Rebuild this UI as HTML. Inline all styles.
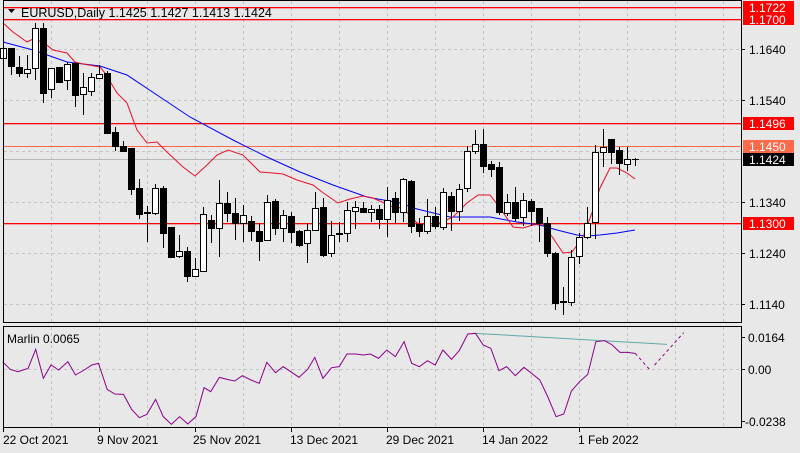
<!DOCTYPE html>
<html><head><meta charset="utf-8"><style>
html,body{margin:0;padding:0;background:#e8e8e8;}
svg{display:block;font-family:"Liberation Sans",sans-serif;font-size:12px;}
.w{fill:#fff;stroke:#000;stroke-width:1}
.b{fill:#000;stroke:#000;stroke-width:1}
.g{stroke:#c4c4c4;stroke-width:1;stroke-dasharray:3,3;fill:none}
</style></head><body>
<svg width="800" height="453" viewBox="0 0 800 453" xmlns="http://www.w3.org/2000/svg">
<rect width="800" height="453" fill="#e8e8e8"/>
<path class="g" d="M51.5 1V322M99.5 1V322M147.5 1V322M195.5 1V322M243.5 1V322M291.5 1V322M339.5 1V322M387.5 1V322M435.5 1V322M483.5 1V322M531.5 1V322M579.5 1V322M627.5 1V322M675.5 1V322M723.5 1V322M4 49.5H741M4 100.5H741M4 151.5H741M4 202.5H741M4 253.5H741M4 304.5H741"/>
<path class="g" d="M51.5 327V427M99.5 327V427M147.5 327V427M195.5 327V427M243.5 327V427M291.5 327V427M339.5 327V427M387.5 327V427M435.5 327V427M483.5 327V427M531.5 327V427M579.5 327V427M627.5 327V427M675.5 327V427M723.5 327V427M4 369.5H741"/>
<rect x="4" y="7" width="737" height="1.3" fill="#ff0000"/>
<rect x="4" y="19" width="737" height="1.3" fill="#ff0000"/>
<rect x="4" y="123" width="737" height="1.3" fill="#ff0000"/>
<rect x="4" y="223" width="737" height="1.3" fill="#ff0000"/>
<rect x="4" y="146" width="737" height="1" fill="#ff6a4a"/>
<rect x="4" y="159" width="737" height="1" fill="#b8b8b8"/>
<polyline fill="none" stroke="#00f" stroke-width="1" points="3,42 33,50 67,62 100,66 127,75 160,97 190,117 233,140 267,157 300,172 333,185 367,197 400,203 417,209 450,217 490,217 517,222 540,225 557,230 577,235 587,236 600,235 617,233 635,230"/>
<polyline fill="none" stroke="#e8102a" stroke-width="1" points="3,23 13,32 27,42 33,39 43,42 53,50 67,53 75,62 83,64 100,67 105,73 117,93 127,103 137,130 147,143 157,142 167,152 183,167 195,176 207,165 217,155 228,150 243,155 260,172 273,173 283,174 297,180 313,185 322,192 338,203 350,199 363,196 373,198 393,207 403,208 417,223 433,226 453,217 467,203 478,195 490,195 500,208 513,227 523,228 533,225 543,224 553,238 563,253 572,252 583,237 593,210 600,188 610,168 617,168 627,173 635,179"/>
<path stroke="#000" stroke-width="1" fill="none" d="M3.5 48V58M11.5 48V75M19.5 56V77M27.5 55V78M35.5 23V80M43.5 23V103M51.5 68V98M59.5 67V83M67.5 62V90M75.5 63V107M83.5 73V115M91.5 73V96M99.5 65V78M107.5 71V133M115.5 127V151M123.5 141V151M131.5 148V195M139.5 179V219M147.5 206V242M155.5 184V215M163.5 186V248M171.5 227V258M179.5 235V258M187.5 247V282M195.5 258V276M203.5 207V271M211.5 215V243M219.5 180V257M227.5 192V222M235.5 198V240M243.5 205V242M251.5 216V241M259.5 223V261M267.5 195V240M275.5 199V235M283.5 210V242M291.5 212V243M299.5 230V247M307.5 223V263M315.5 192V230M323.5 198V257M331.5 221V257M339.5 222V242M347.5 202V242M355.5 201V229M363.5 202V212M371.5 205V222M379.5 205V229M387.5 187V237M395.5 192V223M403.5 178V222M411.5 180V233M419.5 218V237M427.5 199V234M435.5 207V229M443.5 188V230M451.5 192V231M459.5 184V221M467.5 146V192M475.5 130V154M483.5 129V173M491.5 161V177M499.5 162V215M507.5 194V216M515.5 187V221M523.5 193V226M531.5 199V226M539.5 208V242M547.5 217V257M555.5 252V310M563.5 287V315M571.5 250V306M579.5 233V264M587.5 207V239M595.5 145V239M603.5 129V167M611.5 139V164M619.5 147V175M627.5 147V171M635.5 158V166M632 159.5H639"/>
<g>
<rect class="w" x="0.5" y="48.5" width="6" height="10"/>
<rect class="b" x="8.5" y="48.5" width="6" height="18"/>
<rect class="b" x="16.5" y="67.5" width="6" height="6"/>
<rect class="w" x="24.5" y="69.5" width="6" height="4"/>
<rect class="w" x="32.5" y="28.5" width="6" height="40"/>
<rect class="b" x="40.5" y="28.5" width="6" height="65"/>
<rect class="w" x="48.5" y="68.5" width="6" height="21"/>
<rect class="b" x="56.5" y="67.5" width="6" height="15"/>
<rect class="w" x="64.5" y="64.5" width="6" height="16"/>
<rect class="b" x="72.5" y="63.5" width="6" height="32"/>
<rect class="w" x="80.5" y="87.5" width="6" height="7"/>
<rect class="w" x="88.5" y="77.5" width="6" height="14"/>
<rect class="w" x="96.5" y="74.5" width="6" height="4"/>
<rect class="b" x="104.5" y="73.5" width="6" height="60"/>
<rect class="b" x="112.5" y="132.5" width="6" height="14"/>
<rect class="b" x="120.5" y="146.5" width="6" height="5"/>
<rect class="b" x="128.5" y="148.5" width="6" height="41"/>
<rect class="b" x="136.5" y="188.5" width="6" height="26"/>
<rect class="b" x="144.5" y="212.5" width="6" height="1"/>
<rect class="w" x="152.5" y="188.5" width="6" height="25"/>
<rect class="b" x="160.5" y="188.5" width="6" height="45"/>
<rect class="b" x="168.5" y="227.5" width="6" height="30"/>
<rect class="w" x="176.5" y="251.5" width="6" height="5"/>
<rect class="b" x="184.5" y="251.5" width="6" height="25"/>
<rect class="w" x="192.5" y="269.5" width="6" height="7"/>
<rect class="w" x="200.5" y="214.5" width="6" height="57"/>
<rect class="b" x="208.5" y="220.5" width="6" height="8"/>
<rect class="w" x="216.5" y="203.5" width="6" height="25"/>
<rect class="b" x="224.5" y="203.5" width="6" height="10"/>
<rect class="b" x="232.5" y="213.5" width="6" height="10"/>
<rect class="w" x="240.5" y="215.5" width="6" height="8"/>
<rect class="b" x="248.5" y="221.5" width="6" height="10"/>
<rect class="b" x="256.5" y="231.5" width="6" height="10"/>
<rect class="w" x="264.5" y="202.5" width="6" height="38"/>
<rect class="b" x="272.5" y="201.5" width="6" height="27"/>
<rect class="w" x="280.5" y="215.5" width="6" height="13"/>
<rect class="b" x="288.5" y="216.5" width="6" height="16"/>
<rect class="b" x="296.5" y="231.5" width="6" height="14"/>
<rect class="w" x="304.5" y="230.5" width="6" height="13"/>
<rect class="w" x="312.5" y="208.5" width="6" height="22"/>
<rect class="b" x="320.5" y="207.5" width="6" height="48"/>
<rect class="w" x="328.5" y="235.5" width="6" height="18"/>
<rect class="b" x="336.5" y="233.5" width="6" height="1"/>
<rect class="w" x="344.5" y="210.5" width="6" height="23"/>
<rect class="w" x="352.5" y="207.5" width="6" height="4"/>
<rect class="b" x="360.5" y="208.5" width="6" height="4"/>
<rect class="w" x="368.5" y="209.5" width="6" height="3"/>
<rect class="b" x="376.5" y="209.5" width="6" height="10"/>
<rect class="w" x="384.5" y="200.5" width="6" height="19"/>
<rect class="b" x="392.5" y="198.5" width="6" height="14"/>
<rect class="w" x="400.5" y="179.5" width="6" height="33"/>
<rect class="b" x="408.5" y="181.5" width="6" height="45"/>
<rect class="b" x="416.5" y="224.5" width="6" height="7"/>
<rect class="w" x="424.5" y="216.5" width="6" height="15"/>
<rect class="b" x="432.5" y="216.5" width="6" height="10"/>
<rect class="w" x="440.5" y="192.5" width="6" height="35"/>
<rect class="b" x="448.5" y="196.5" width="6" height="15"/>
<rect class="w" x="456.5" y="189.5" width="6" height="22"/>
<rect class="w" x="464.5" y="151.5" width="6" height="37"/>
<rect class="w" x="472.5" y="144.5" width="6" height="7"/>
<rect class="b" x="480.5" y="144.5" width="6" height="22"/>
<rect class="b" x="488.5" y="164.5" width="6" height="5"/>
<rect class="b" x="496.5" y="167.5" width="6" height="45"/>
<rect class="w" x="504.5" y="202.5" width="6" height="11"/>
<rect class="b" x="512.5" y="202.5" width="6" height="16"/>
<rect class="w" x="520.5" y="200.5" width="6" height="17"/>
<rect class="b" x="528.5" y="201.5" width="6" height="10"/>
<rect class="b" x="536.5" y="208.5" width="6" height="15"/>
<rect class="b" x="544.5" y="223.5" width="6" height="30"/>
<rect class="b" x="552.5" y="253.5" width="6" height="50"/>
<rect class="b" x="560.5" y="301.5" width="6" height="1"/>
<rect class="w" x="568.5" y="257.5" width="6" height="45"/>
<rect class="w" x="576.5" y="237.5" width="6" height="19"/>
<rect class="w" x="584.5" y="223.5" width="6" height="14"/>
<rect class="w" x="592.5" y="152.5" width="6" height="70"/>
<rect class="w" x="600.5" y="147.5" width="6" height="5"/>
<rect class="b" x="608.5" y="139.5" width="6" height="13"/>
<rect class="b" x="616.5" y="150.5" width="6" height="13"/>
<rect class="w" x="624.5" y="159.5" width="6" height="5"/>
</g>
<g transform="translate(0,320) scale(0.5102,0.33333)">
<polyline fill="none" stroke="#5fa8a8" stroke-width="1" vector-effect="non-scaling-stroke" points="930,40 1307,73"/>
<polyline fill="none" stroke="#8b008b" stroke-width="1" vector-effect="non-scaling-stroke" points="5,125 20,148 35,155 55,145 70,88 85,175 100,135 115,150 133,125 148,165 165,150 180,135 193,130 210,208 225,222 242,223 258,268 273,293 288,283 305,238 320,290 336,313 352,290 368,312 384,290 400,203 413,215 430,172 445,178 460,183 475,167 492,180 508,190 523,127 540,158 555,140 570,155 586,172 603,148 617,112 633,175 650,143 665,140 680,102 697,102 712,105 726,102 742,115 758,90 775,110 792,65 807,130 822,140 838,122 853,135 868,90 885,118 900,92 917,42 932,40 947,75 962,85 978,152 993,140 1010,167 1027,142 1042,160 1058,180 1073,228 1090,290 1105,282 1120,213 1136,185 1152,163 1168,65 1185,62 1200,75 1215,97 1230,97 1245,100"/>
<polyline fill="none" stroke="#8b008b" stroke-width="1" stroke-dasharray="3,3" vector-effect="non-scaling-stroke" points="1245,100 1273,148"/>
<polyline fill="none" stroke="#8b008b" stroke-width="1" stroke-dasharray="3,3" vector-effect="non-scaling-stroke" points="1283,135 1340,38"/>
</g>
<rect x="3.5" y="0.5" width="738" height="322" fill="none" stroke="#000"/>
<rect x="3.5" y="326.5" width="738" height="101" fill="none" stroke="#000"/>
<path stroke="#000" fill="none" d="M741 49.5h4M741 100.5h4M741 202.5h4M741 253.5h4M741 304.5h4M741 337.5h4M741 369.5h4M741 421.5h4M3.5 428v4M99.5 428v4M195.5 428v4M291.5 428v4M387.5 428v4M483.5 428v4M579.5 428v4"/>
<path d="M8 9h7l-3.5 4z" fill="#000"/>
<text x="21" y="17" fill="#000" font-size="12.5">EURUSD,Daily  1.1425 1.1427 1.1413 1.1424</text>
<text x="7" y="343" fill="#000">Marlin 0.0065</text>
<rect x="743" y="1" width="51" height="12" fill="#f00"/>
<rect x="743" y="13" width="51" height="12" fill="#f00"/>
<rect x="743" y="117" width="51" height="13" fill="#f00"/>
<rect x="743" y="140" width="51" height="13" fill="#ff6a4a"/>
<rect x="743" y="153" width="51" height="13" fill="#000"/>
<rect x="743" y="217" width="51" height="13" fill="#f00"/>
<g fill="#fff">
<text x="749" y="12">1.1722</text>
<text x="749" y="24">1.1700</text>
<text x="749" y="128">1.1496</text>
<text x="749" y="151">1.1450</text>
<text x="749" y="164">1.1424</text>
<text x="749" y="228">1.1300</text>
</g>
<g fill="#000">
<text x="749" y="54">1.1640</text>
<text x="749" y="105">1.1540</text>
<text x="749" y="207">1.1340</text>
<text x="749" y="258">1.1240</text>
<text x="749" y="309">1.1140</text>
<text x="748" y="342">0.0164</text>
<text x="748" y="374">0.00</text>
<text x="745" y="426">-0.0238</text>
<text x="3" y="444">22 Oct 2021</text>
<text x="97" y="444">9 Nov 2021</text>
<text x="193" y="444">25 Nov 2021</text>
<text x="290" y="444">13 Dec 2021</text>
<text x="386" y="444">29 Dec 2021</text>
<text x="482" y="444">14 Jan 2022</text>
<text x="578" y="444">1 Feb 2022</text>
</g>
</svg>
</body></html>
